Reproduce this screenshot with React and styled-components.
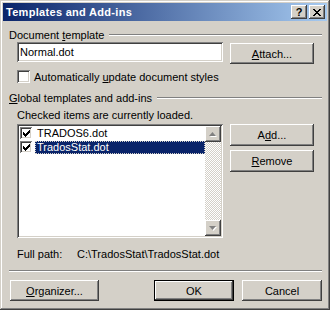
import styled, { createGlobalStyle, css } from "styled-components";

const GlobalStyle = createGlobalStyle`
  html, body {
    margin: 0;
    padding: 0;
    background: #d4d0c8;
  }
  * {
    box-sizing: border-box;
  }
`;

const raised = css`
  box-shadow: inset -1px -1px #404040, inset 1px 1px #ffffff,
    inset -2px -2px #808080, inset 2px 2px #d4d0c8;
`;

const sunken = css`
  box-shadow: inset 1px 1px #808080, inset -1px -1px #ffffff,
    inset 2px 2px #404040, inset -2px -2px #d4d0c8;
`;

const Window = styled.div`
  width: 330px;
  height: 310px;
  padding: 3px;
  background: #d4d0c8;
  box-shadow: inset -1px -1px #404040, inset 1px 1px #d4d0c8,
    inset -2px -2px #808080, inset 2px 2px #ffffff;
  display: flex;
  flex-direction: column;
  font-family: "Liberation Sans", Arial, sans-serif;
  font-size: 11px;
  color: #000;
`;

const TitleBar = styled.div`
  height: 18px;
  display: flex;
  align-items: center;
  padding: 0 2px 0 3px;
  background: linear-gradient(to right, #0a246a, #a6caf0);
`;

const Title = styled.div`
  flex: 1;
  color: #fff;
  font-weight: bold;
  font-size: 11px;
  letter-spacing: 0.3px;
`;

const CaptionButton = styled.div`
  width: 16px;
  height: 14px;
  margin-left: ${(p) => (p.$gap ? "2px" : "0")};
  background: #d4d0c8;
  ${raised};
  display: flex;
  align-items: center;
  justify-content: center;
  font-weight: bold;
  font-size: 11px;
  line-height: 14px;
`;

const Content = styled.div`
  flex: 1;
  display: flex;
  flex-direction: column;
  padding: 0 5px 0 6px;
`;

const GroupHeader = styled.div`
  height: 14px;
  margin-top: ${(p) => p.$top}px;
  display: flex;
  align-items: center;
`;

const Rule = styled.div`
  flex: 1;
  height: 2px;
  margin-left: 5px;
  border-top: 1px solid #808080;
  border-bottom: 1px solid #ffffff;
`;

const GroupBody = styled.div`
  padding-left: 8px;
  display: flex;
  flex-direction: column;
`;

const Row = styled.div`
  display: flex;
  align-items: flex-start;
  margin-top: ${(p) => p.$top || 0}px;
`;

const TextInput = styled.div`
  width: 206px;
  height: 20px;
  background: #fff;
  ${sunken};
  padding: 0 3px;
  line-height: 20px;
`;

const Button = styled.div`
  width: ${(p) => p.$w || 84}px;
  height: ${(p) => p.$h || 22}px;
  margin-left: ${(p) => p.$ml || 0}px;
  margin-top: ${(p) => p.$mt || 0}px;
  background: #d4d0c8;
  ${raised};
  display: flex;
  align-items: center;
  justify-content: center;
  ${(p) =>
    p.$default &&
    css`
      box-shadow: inset 0 0 0 1px #000, inset -2px -2px #404040,
        inset 2px 2px #ffffff, inset -3px -3px #808080;
    `}
`;

const CheckRow = styled.div`
  display: flex;
  align-items: center;
  height: 13px;
  margin-top: ${(p) => p.$top || 0}px;
`;

const CheckBox = styled.div`
  width: ${(p) => p.$size || 13}px;
  height: ${(p) => p.$size || 13}px;
  background: #fff;
  ${sunken};
  display: flex;
  align-items: center;
  justify-content: center;
  flex-shrink: 0;
`;

const CheckLabel = styled.span`
  margin-left: 4px;
`;

const Note = styled.div`
  height: 14px;
  line-height: 14px;
  margin-top: ${(p) => p.$top || 0}px;
`;

const ListBox = styled.div`
  width: 206px;
  height: 114px;
  background: #fff;
  ${sunken};
  padding: 2px;
  display: flex;
`;

const Items = styled.div`
  flex: 1;
  display: flex;
  flex-direction: column;
`;

const Item = styled.div`
  height: 14px;
  display: flex;
  align-items: center;
  padding-left: 1px;
`;

const ItemLabel = styled.span`
  flex: 1;
  height: 13px;
  line-height: 13px;
  margin-left: 3px;
  padding-left: 2px;
  ${(p) =>
    p.$selected &&
    css`
      background: #0a246a;
      color: #fff;
      outline: 1px dotted #d4d0c8;
      outline-offset: -1px;
    `}
`;

const ScrollBar = styled.div`
  width: 16px;
  display: flex;
  flex-direction: column;
`;

const ScrollButton = styled.div`
  width: 16px;
  height: 16px;
  background: #d4d0c8;
  ${raised};
  display: flex;
  align-items: center;
  justify-content: center;
`;

const Track = styled.div`
  flex: 1;
  background-image: conic-gradient(
    #ffffff 0 25%,
    #d4d0c8 0 50%,
    #ffffff 0 75%,
    #d4d0c8 0
  );
  background-size: 2px 2px;
`;

const SideButtons = styled.div`
  display: flex;
  flex-direction: column;
  gap: 4px;
  margin-left: 7px;
`;

const PathRow = styled.div`
  display: flex;
  height: 14px;
  line-height: 14px;
  margin-top: 9px;
`;

const PathLabel = styled.span`
  width: 60px;
`;

const Separator = styled.div`
  height: 2px;
  margin-top: 9px;
  border-top: 1px solid #808080;
  border-bottom: 1px solid #ffffff;
`;

const Footer = styled.div`
  display: flex;
  margin-top: 8px;
  padding-left: 1px;
`;

const Spacer = styled.div`
  flex: 1;
`;

const checkPixels = [
  [6, 0], [5, 1], [6, 1], [0, 2], [4, 2], [5, 2], [6, 2],
  [0, 3], [1, 3], [3, 3], [4, 3], [5, 3], [0, 4], [1, 4], [2, 4],
  [3, 4], [4, 4], [1, 5], [2, 5], [3, 5], [2, 6],
];

function CheckMark() {
  const d = checkPixels.map(([x, y]) => `M${x} ${y}h1v1h-1z`).join("");
  return (
    <svg width="7" height="7" viewBox="0 0 7 7" shapeRendering="crispEdges">
      <path d={d} fill="#000" />
    </svg>
  );
}

function CloseGlyph() {
  return (
    <svg width="8" height="7" viewBox="0 0 8 7" shapeRendering="crispEdges">
      <path
        d="M0 0h2v1h-2zM6 0h2v1h-2zM1 1h2v1h-2zM5 1h2v1h-2zM2 2h4v1h-4zM3 3h2v1h-2zM2 4h4v1h-4zM1 5h2v1h-2zM5 5h2v1h-2zM0 6h2v1h-2zM6 6h2v1h-2z"
        fill="#000"
      />
    </svg>
  );
}

function Arrow({ down }) {
  const shape = down ? "M0 0h7l-3.5 4z" : "M3.5 0l3.5 4h-7z";
  return (
    <svg width="8" height="5" viewBox="0 0 8 5">
      <path d={shape} fill="#fff" transform="translate(1 1)" />
      <path d={shape} fill="#808080" />
    </svg>
  );
}

export default function App() {
  return (
    <>
      <GlobalStyle />
      <Window>
        <TitleBar>
          <Title>Templates and Add-ins</Title>
          <CaptionButton>?</CaptionButton>
          <CaptionButton $gap>
            <CloseGlyph />
          </CaptionButton>
        </TitleBar>
        <Content>
          <GroupHeader $top={7}>
            <span>
              Document <u>t</u>emplate
            </span>
            <Rule />
          </GroupHeader>
          <GroupBody>
            <Row>
              <TextInput>Normal.dot</TextInput>
              <Button $ml={7} $mt={1} $h={21}>
                <span>
                  <u>A</u>ttach...
                </span>
              </Button>
            </Row>
            <CheckRow $top={6}>
              <CheckBox />
              <CheckLabel>
                Automatically <u>u</u>pdate document styles
              </CheckLabel>
            </CheckRow>
          </GroupBody>
          <GroupHeader $top={8}>
            <span>
              <u>G</u>lobal templates and add-ins
            </span>
            <Rule />
          </GroupHeader>
          <GroupBody>
            <Note $top={3}>Checked items are currently loaded.</Note>
            <Row $top={2}>
              <ListBox>
                <Items>
                  <Item>
                    <CheckBox $size={12}>
                      <CheckMark />
                    </CheckBox>
                    <ItemLabel>TRADOS6.dot</ItemLabel>
                  </Item>
                  <Item>
                    <CheckBox $size={12}>
                      <CheckMark />
                    </CheckBox>
                    <ItemLabel $selected>TradosStat.dot</ItemLabel>
                  </Item>
                </Items>
                <ScrollBar>
                  <ScrollButton>
                    <Arrow />
                  </ScrollButton>
                  <Track />
                  <ScrollButton>
                    <Arrow down />
                  </ScrollButton>
                </ScrollBar>
              </ListBox>
              <SideButtons>
                <Button>
                  <span>
                    A<u>d</u>d...
                  </span>
                </Button>
                <Button>
                  <span>
                    <u>R</u>emove
                  </span>
                </Button>
              </SideButtons>
            </Row>
            <PathRow>
              <PathLabel>Full path:</PathLabel>
              <span>C:\TradosStat\TradosStat.dot</span>
            </PathRow>
          </GroupBody>
          <Separator />
          <Footer>
            <Button $w={89} $h={21}>
              <span>
                <u>O</u>rganizer...
              </span>
            </Button>
            <Spacer />
            <Button $w={80} $h={21} $default>
              OK
            </Button>
            <Button $w={80} $h={21} $ml={8}>
              Cancel
            </Button>
          </Footer>
        </Content>
      </Window>
    </>
  );
}
